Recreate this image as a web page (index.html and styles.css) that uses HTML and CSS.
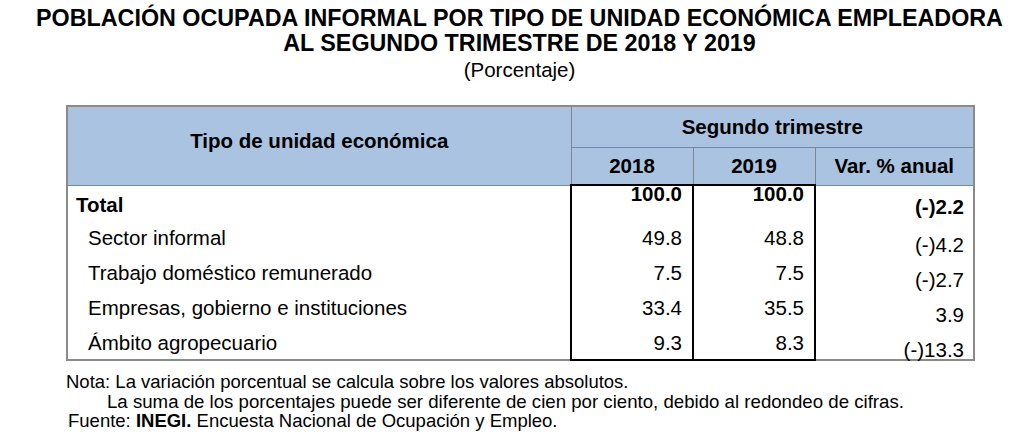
FILE: index.html
```html
<!DOCTYPE html>
<html lang="es">
<head>
<meta charset="utf-8">
<title>Población ocupada informal</title>
<link rel="stylesheet" href="styles.css">
</head>
<body>
<div class="page">
  <h1 class="title">POBLACIÓN OCUPADA INFORMAL POR TIPO DE UNIDAD ECONÓMICA EMPLEADORA<br>AL SEGUNDO TRIMESTRE DE 2018 Y 2019</h1>
  <p class="subtitle">(Porcentaje)</p>
  <table class="data">
    <colgroup>
      <col class="c-tipo"><col class="c-num"><col class="c-num"><col class="c-var">
    </colgroup>
    <thead>
      <tr class="h1">
        <th rowspan="2" class="h-tipo">Tipo de unidad económica</th>
        <th colspan="3">Segundo trimestre</th>
      </tr>
      <tr class="h2">
        <th>2018</th><th>2019</th><th>Var. % anual</th>
      </tr>
    </thead>
    <tbody>
      <tr class="total">
        <td class="lbl">Total</td><td class="num">100.0</td><td class="num">100.0</td><td class="var">(-)2.2</td>
      </tr>
      <tr>
        <td class="lbl sub">Sector informal</td><td class="num">49.8</td><td class="num">48.8</td><td class="var">(-)4.2</td>
      </tr>
      <tr>
        <td class="lbl sub">Trabajo doméstico remunerado</td><td class="num">7.5</td><td class="num">7.5</td><td class="var">(-)2.7</td>
      </tr>
      <tr>
        <td class="lbl sub">Empresas, gobierno e instituciones</td><td class="num">33.4</td><td class="num">35.5</td><td class="var">3.9</td>
      </tr>
      <tr>
        <td class="lbl sub">Ámbito agropecuario</td><td class="num">9.3</td><td class="num">8.3</td><td class="var">(-)13.3</td>
      </tr>
    </tbody>
  </table>
  <div class="notes">
    <p class="note">Nota: La variación porcentual se calcula sobre los valores absolutos.</p>
    <p class="note indent">La suma de los porcentajes puede ser diferente de cien por ciento, debido al redondeo de cifras.</p>
    <p class="note source">Fuente: <b>INEGI.</b> Encuesta Nacional de Ocupación y Empleo.</p>
  </div>
</div>
</body>
</html>
```

FILE: styles.css
```css
html, body {
  margin: 0;
  padding: 0;
  background: #ffffff;
}

body {
  font-family: "Liberation Sans", Arial, sans-serif;
  color: #000000;
}

.page {
  width: 907px;
  margin-left: 66px;
  padding-top: 6px;
}

.title {
  margin: 0 -60px;
  font-size: 23.3px;
  line-height: 25px;
  font-weight: bold;
  text-align: center;
  white-space: nowrap;
}

.subtitle {
  margin: 2px 0 0 0;
  font-size: 20.5px;
  line-height: 24px;
  text-align: center;
}

.data {
  margin-top: 23px;
  width: 907px;
  border-collapse: collapse;
  table-layout: fixed;
  font-size: 20.5px;
  border: 2px solid #8a8a8a;
}

.c-tipo { width: 504px; }
.c-num { width: 122px; }
.c-var { width: 159px; }

.data th {
  background: #a9c3e0;
  font-weight: bold;
  text-align: center;
  border: 1px solid #7d8794;
  padding: 0;
  line-height: 22px;
}

.data .h1 th { height: 40px; }
.data .h2 th { height: 36px; }

.data th.h-tipo {
  border-right: 1px solid #7d8794;
  padding-bottom: 10px;
}

.data tbody tr {
  height: 35px;
}

.data td {
  padding: 0;
  vertical-align: top;
  line-height: 20px;
}

.data td.lbl {
  padding-top: 8px;
  padding-left: 8px;
}

.data td.sub {
  padding-left: 20px;
}

.data tr.total td.lbl {
  font-weight: bold;
  padding-top: 9px;
}

.data td.num {
  text-align: right;
  padding-top: 8px;
  padding-right: 10px;
  border-left: 2px solid #000000;
  border-right: 2px solid #000000;
}

.data tbody tr:first-child td.num {
  border-top: 2px solid #000000;
}

.data tbody tr:last-child td.num {
  border-bottom: 2px solid #000000;
}

.data tr.total td.num {
  font-weight: bold;
  padding-top: 0;
  line-height: 16px;
}

.data td.var {
  text-align: right;
  padding-top: 16px;
  padding-right: 9px;
  line-height: 18px;
}

.data tr.total td.var {
  font-weight: bold;
  padding-top: 12px;
}

.notes {
  margin-top: 11px;
  font-size: 18.5px;
  line-height: 19.5px;
}

.note {
  margin: 0;
  white-space: nowrap;
}

.note.indent {
  padding-left: 41px;
  font-size: 18.65px;
}

.note.source {
  padding-left: 2px;
}
```
